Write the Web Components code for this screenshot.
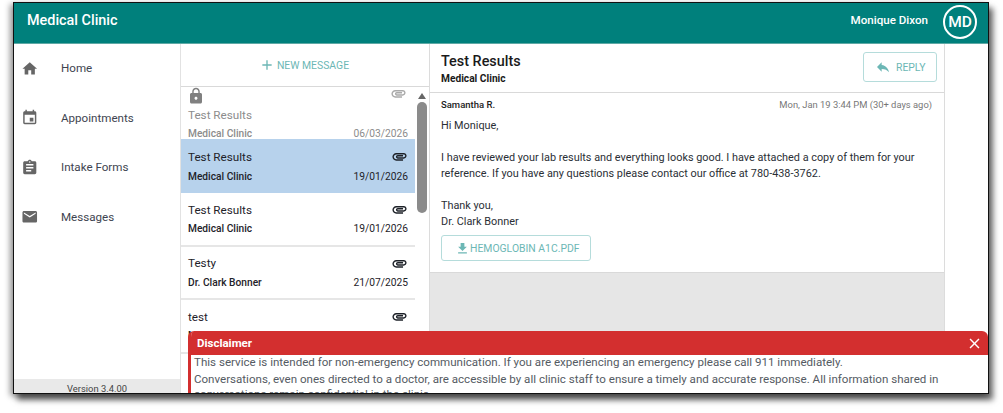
<!DOCTYPE html>
<html lang="en">
<head>
<meta charset="utf-8">
<title>Medical Clinic</title>
<style>
  html, body { margin: 0; background: #fff; font-family: Roboto, "Liberation Sans", sans-serif; }
  body { width: 1003px; height: 413px; overflow: hidden; padding: 2px 13px 0; box-sizing: border-box; }
</style>
</head>
<body>
<clinic-app>
  <clinic-header slot="header" clinic="Medical Clinic" user="Monique Dixon" initials="MD"></clinic-header>
  <side-nav slot="nav" version="Version 3.4.00">
    <nav-item icon="home">Home</nav-item>
    <nav-item icon="calendar">Appointments</nav-item>
    <nav-item icon="clipboard">Intake Forms</nav-item>
    <nav-item icon="mail">Messages</nav-item>
  </side-nav>
  <message-list slot="list">
    <message-row locked title="Test Results" from="Medical Clinic" date="06/03/2026"></message-row>
    <message-row selected title="Test Results" from="Medical Clinic" date="19/01/2026"></message-row>
    <message-row title="Test Results" from="Medical Clinic" date="19/01/2026"></message-row>
    <message-row title="Testy" from="Dr. Clark Bonner" date="21/07/2025"></message-row>
    <message-row title="test" from="Medical Clinic" date="21/07/2025"></message-row>
  </message-list>
  <message-detail slot="detail" title="Test Results" from="Medical Clinic" sender="Samantha R." sent="Mon, Jan 19 3:44 PM (30+ days ago)" attachment="HEMOGLOBIN A1C.PDF">
    <p>Hi Monique,</p>
    <p>I have reviewed your lab results and everything looks good. I have attached a copy of them for your reference. If you have any questions please contact our office at 780-438-3762.</p>
    <p>Thank you,<br>Dr. Clark Bonner</p>
  </message-detail>
  <disclaimer-banner slot="overlay" heading="Disclaimer">
    <p>This service is intended for non-emergency communication. If you are experiencing an emergency please call 911 immediately.</p>
    <p>Conversations, even ones directed to a doctor, are accessible by all clinic staff to ensure a timely and accurate response. All information shared in conversations remain confidential in the clinic.</p>
  </disclaimer-banner>
</clinic-app>

<script>
// Iconos SVG (24x24)
const ICONS = {
  home: '<path d="M10 20v-6h4v6h5v-8h3L12 3 2 12h3v8z"/>',
  calendar: '<path d="M17 12h-5v5h5v-5zM16 1v2H8V1H6v2H5c-1.11 0-2 .9-2 2v14c0 1.1.89 2 2 2h14c1.1 0 2-.9 2-2V5c0-1.1-.9-2-2-2h-1V1h-2zm3 18H5V8h14v11z"/>',
  clipboard: '<path d="M19 3h-4.18C14.4 1.84 13.3 1 12 1s-2.4.84-2.82 2H5c-1.1 0-2 .9-2 2v14c0 1.1.9 2 2 2h14c1.1 0 2-.9 2-2V5c0-1.1-.9-2-2-2zm-7 0c.55 0 1 .45 1 1s-.45 1-1 1-1-.45-1-1 .45-1 1-1zm2 14H7v-2h7v2zm3-4H7v-2h10v2zm0-4H7V7h10v2z"/>',
  mail: '<path d="M20 4H4c-1.1 0-2 .9-2 2v12c0 1.1.9 2 2 2h16c1.1 0 2-.9 2-2V6c0-1.1-.9-2-2-2zm0 4l-8 5-8-5V6l8 5 8-5v2z"/>',
  lock: '<path d="M18 8h-1V6c0-2.76-2.24-5-5-5S7 3.24 7 6v2H6c-1.1 0-2 .9-2 2v10c0 1.1.9 2 2 2h12c1.1 0 2-.9 2-2V10c0-1.1-.9-2-2-2zm-6 9c-1.1 0-2-.9-2-2s.9-2 2-2 2 .9 2 2-.9 2-2 2zm3.1-9H8.9V6c0-1.71 1.39-3.1 3.1-3.1 1.71 0 3.1 1.39 3.1 3.1v2z"/>',
  clip: '<path d="M2 12.5C2 9.46 4.46 7 7.5 7H18c2.21 0 4 1.79 4 4s-1.79 4-4 4H9.5C8.12 15 7 13.88 7 12.5S8.12 10 9.5 10H17v2H9.41c-.55 0-.55 1 0 1H18c1.1 0 2-.9 2-2s-.9-2-2-2H7.5C5.57 9 4 10.57 4 12.5S5.57 16 7.5 16H17v2H7.5C4.46 18 2 15.54 2 12.5z"/>',
  plus: '<path d="M19 13h-6v6h-2v-6H5v-2h6V5h2v6h6v2z"/>',
  reply: '<path d="M10 9V5l-7 7 7 7v-4.1c5 0 8.5 1.6 11 5.1-1-5-4-10-11-11z"/>',
  download: '<path d="M19 9h-4V3H9v6H5l7 7 7-7zM5 18v2h14v-2H5z"/>',
  close: '<path d="M19 6.41 17.59 5 12 10.59 6.41 5 5 6.41 10.59 12 5 17.59 6.41 19 12 13.41 17.59 19 19 17.59 13.41 12z"/>',
};
const icon = (name, size) => `<svg width="${size}" height="${size}" viewBox="0 0 24 24" fill="currentColor" aria-hidden="true">${ICONS[name]}</svg>`;

/** Base: crea el shadow root abierto con el html que devuelve render(). */
class ShadowElement extends HTMLElement {
  connectedCallback() {
    if (this.shadowRoot) return;
    this.attachShadow({ mode: 'open' }).innerHTML = this.render();
  }
  attr(name) {
    return this.getAttribute(name) || '';
  }
}

class ClinicApp extends ShadowElement {
  render() {
    return `
      <style>
        :host {
          display: grid;
          position: relative;
          width: 976px;
          height: 392px;
          box-sizing: border-box;
          grid-template-columns: 167px 249px 515px 1fr;
          grid-template-rows: 41px 1fr;
          border: 1px solid #111;
          background: #fff;
          overflow: hidden;
          box-shadow: 4px 6px 6px rgba(0, 0, 0, .6), -3px 2px 6px rgba(0, 0, 0, .4);
        }
        .header { grid-column: 1 / -1; }
        .nav, .list, .detail { display: block; min-height: 0; }
        .filler { background: #fff; }
      </style>
      <slot class="header" name="header"></slot>
      <slot class="nav" name="nav"></slot>
      <slot class="list" name="list"></slot>
      <slot class="detail" name="detail"></slot>
      <div class="filler"></div>
      <slot name="overlay"></slot>
    `;
  }
}

class ClinicHeader extends ShadowElement {
  render() {
    return `
      <style>
        :host {
          display: flex;
          grid-column: 1 / -1;
          align-items: center;
          justify-content: space-between;
          padding: 0 11px 3px 13px;
          background: #00807c;
          border-bottom: 1px solid #5fa9a5;
          box-sizing: border-box;
          color: #fff;
        }
        .clinic { font-size: 14.4px; font-weight: 500; margin-top: -3px; }
        .user { display: flex; align-items: center; gap: 15px; font-size: 11.6px; font-weight: 500; }
        .name { margin-top: -3px; }
        .avatar {
          display: flex;
          align-items: center;
          justify-content: center;
          width: 30px;
          height: 30px;
          border: 2px solid #fff;
          border-radius: 50%;
          font-size: 15.5px;
          font-weight: 500;
        }
      </style>
      <span class="clinic">${this.attr('clinic')}</span>
      <span class="user"><span class="name">${this.attr('user')}</span><span class="avatar">${this.attr('initials')}</span></span>
    `;
  }
}

class SideNav extends ShadowElement {
  render() {
    return `
      <style>
        :host {
          display: flex;
          flex-direction: column;
          height: 100%;
          box-sizing: border-box;
          border-right: 1px solid #e2e2e2;
        }
        nav { flex: 1; margin-top: -0.5px; }
        footer {
          height: 14px;
          background: #e9e9e9;
          color: #444;
          font-size: 9.4px;
          line-height: 19px;
          text-align: center;
          overflow: hidden;
        }
      </style>
      <nav><slot></slot></nav>
      <footer>${this.attr('version')}</footer>
    `;
  }
}

class NavItem extends ShadowElement {
  render() {
    return `
      <style>
        :host {
          display: flex;
          align-items: center;
          gap: 22.5px;
          height: 49.6px;
          padding-left: 7px;
          color: #3e4450;
          font-size: 11.6px;
        }
        svg { color: #666; flex: none; }
      </style>
      ${icon(this.attr('icon'), 17.5)}
      <span><slot></slot></span>
    `;
  }
}

class MessageList extends ShadowElement {
  render() {
    return `
      <style>
        :host {
          display: flex;
          flex-direction: column;
          height: 100%;
          min-height: 0;
          border-right: 1px solid #dcdcdc;
          box-sizing: border-box;
        }
        .new {
          display: flex;
          flex: none;
          align-items: center;
          justify-content: center;
          gap: 2px;
          height: 43px;
          padding-right: 2px;
          border-bottom: 1px solid #d9d9d9;
          box-sizing: border-box;
          color: #6cb7b5;
          font-size: 10.4px;
        }
        .body { display: flex; flex: 1; min-height: 0; overflow: hidden; }
        .rows { flex: 1; min-width: 0; }
        .track { position: relative; flex: none; width: 14px; }
        .arrow {
          width: 0;
          margin: 6px auto 0;
          border: 4px solid transparent;
          border-top: 0;
          border-bottom: 6px solid #666;
        }
        .thumb {
          width: 10px;
          height: 111px;
          margin: 3px auto 0;
          border-radius: 5px;
          background: #8b8b8b;
        }
      </style>
      <div class="new">${icon('plus', 16)}<span>NEW MESSAGE</span></div>
      <div class="body">
        <div class="rows"><slot></slot></div>
        <div class="track"><div class="arrow"></div><div class="thumb"></div></div>
      </div>
    `;
  }
}

class MessageRow extends ShadowElement {
  render() {
    const locked = this.hasAttribute('locked');
    return `
      <style>
        :host {
          display: block;
          box-sizing: border-box;
          padding: 8px 7px 0;
          height: 53.5px;
          border-bottom: 2px solid #e6e6e6;
          color: #1e2229;
        }
        :host([selected]) { height: 54px; padding-top: 9px; background: #b7d2ec; border-bottom: 0; }
        :host([locked]) { height: 52px; padding-top: 0; border-bottom: 0; color: #8c8c8c; }
        .lock { height: 15px; color: #808080; margin-left: -1px; display: flex; justify-content: space-between; }
        .lock svg:last-child { margin: -2px 1px 0 0; color: #aaa; }
        .top, .bottom { display: flex; justify-content: space-between; align-items: center; }
        .top { height: 17.5px; font-size: 11.7px; }
        :host([locked]) .top { margin-top: 4.5px; }
        .bottom { height: 20px; font-size: 10.25px; }
        :host([locked]) .bottom { height: 18px; }
        :host([selected]) .bottom { height: 21px; }
        .from { font-weight: 500; font-size: 10.2px; }
        svg { display: block; }
      </style>
      ${locked ? `<div class="lock">${icon('lock', 18)}${icon('clip', 17)}</div>` : ''}
      <div class="top"><span>${this.attr('title')}</span>${locked ? '' : icon('clip', 17)}</div>
      <div class="bottom"><span class="from">${this.attr('from')}</span><span>${this.attr('date')}</span></div>
    `;
  }
}

class MessageDetail extends ShadowElement {
  render() {
    return `
      <style>
        :host {
          display: flex;
          flex-direction: column;
          height: 100%;
          background: #e6e6e6;
          border-right: 1px solid #dcdcdc;
          box-sizing: border-box;
          color: #2b2f36;
        }
        header {
          display: flex;
          flex: none;
          justify-content: space-between;
          height: 49px;
          padding: 8px 7px 0 11px;
          background: #fff;
          border-bottom: 1px solid #d9d9d9;
          box-sizing: border-box;
        }
        h1 { margin: 0; color: #1a1a1a; font-size: 14.4px; font-weight: 500; line-height: 20px; }
        h2 { margin: 0; color: #1a1a1a; font-size: 10.2px; font-weight: 700; line-height: 14px; }
        .btn {
          display: inline-flex;
          align-items: center;
          box-sizing: border-box;
          border: 1px solid #b5dcdb;
          border-radius: 3px;
          background: #fff;
          color: #6cb7b5;
          font: inherit;
          font-size: 10.4px;
        }
        .reply { gap: 5px; width: 74px; height: 30px; padding-left: 11px; }
        article {
          flex: none;
          height: 180px;
          padding: 3px 11px 0;
          background: #fff;
          border-bottom: 1px solid #d9d9d9;
          box-sizing: border-box;
        }
        .meta { display: flex; justify-content: space-between; align-items: center; height: 16px; padding-right: 1px; }
        .sender { color: #222; font-size: 9.5px; font-weight: 500; }
        .sent { color: #777; font-size: 9.4px; }
        .text { margin-top: 6px; font-size: 10.86px; line-height: 16px; }
        ::slotted(p) { margin: 0 0 16px; }
        ::slotted(p:last-child) { margin: 0; }
        .file { gap: 0; width: 150px; height: 26px; margin-top: 5px; padding: 0 0 0 13px; }
      </style>
      <header>
        <div><h1>${this.attr('title')}</h1><h2>${this.attr('from')}</h2></div>
        <button class="btn reply">${icon('reply', 16)}REPLY</button>
      </header>
      <article>
        <div class="meta"><span class="sender">${this.attr('sender')}</span><span class="sent">${this.attr('sent')}</span></div>
        <div class="text"><slot></slot></div>
        <button class="btn file">${icon('download', 15)}${this.attr('attachment')}</button>
      </article>
    `;
  }
}

class DisclaimerBanner extends ShadowElement {
  connectedCallback() {
    super.connectedCallback();
    // Cerrar el aviso
    this.shadowRoot.querySelector('.close').addEventListener('click', () => this.remove());
  }

  render() {
    return `
      <style>
        :host {
          position: absolute;
          left: 174px;
          right: 0;
          top: 328px;
          bottom: 0;
          box-sizing: border-box;
          border-left: 3px solid #d32f2f;
          background: #fff;
          color: #555b63;
          font-size: 11.57px;
          line-height: 15px;
          overflow: hidden;
          border-top-left-radius: 6px;
          border-top-right-radius: 6px;
        }
        .bar {
          display: flex;
          align-items: center;
          justify-content: space-between;
          height: 24px;
          margin-left: -3px;
          padding: 0 5.5px 0 9px;
          background: #d32f2f;
          color: #fff;
          font-size: 11.5px;
          font-weight: 700;
        }
        .close { display: flex; padding: 0; border: 0; background: none; color: inherit; }
        .text { padding: 0 0 0 3px; }
        ::slotted(p) { margin: 0 0 2px; }
      </style>
      <div class="bar"><span>${this.attr('heading')}</span><button class="close" aria-label="Close">${icon('close', 17)}</button></div>
      <div class="text"><slot></slot></div>
    `;
  }
}

customElements.define('clinic-app', ClinicApp);
customElements.define('clinic-header', ClinicHeader);
customElements.define('side-nav', SideNav);
customElements.define('nav-item', NavItem);
customElements.define('message-list', MessageList);
customElements.define('message-row', MessageRow);
customElements.define('message-detail', MessageDetail);
customElements.define('disclaimer-banner', DisclaimerBanner);
</script>
</body>
</html>
